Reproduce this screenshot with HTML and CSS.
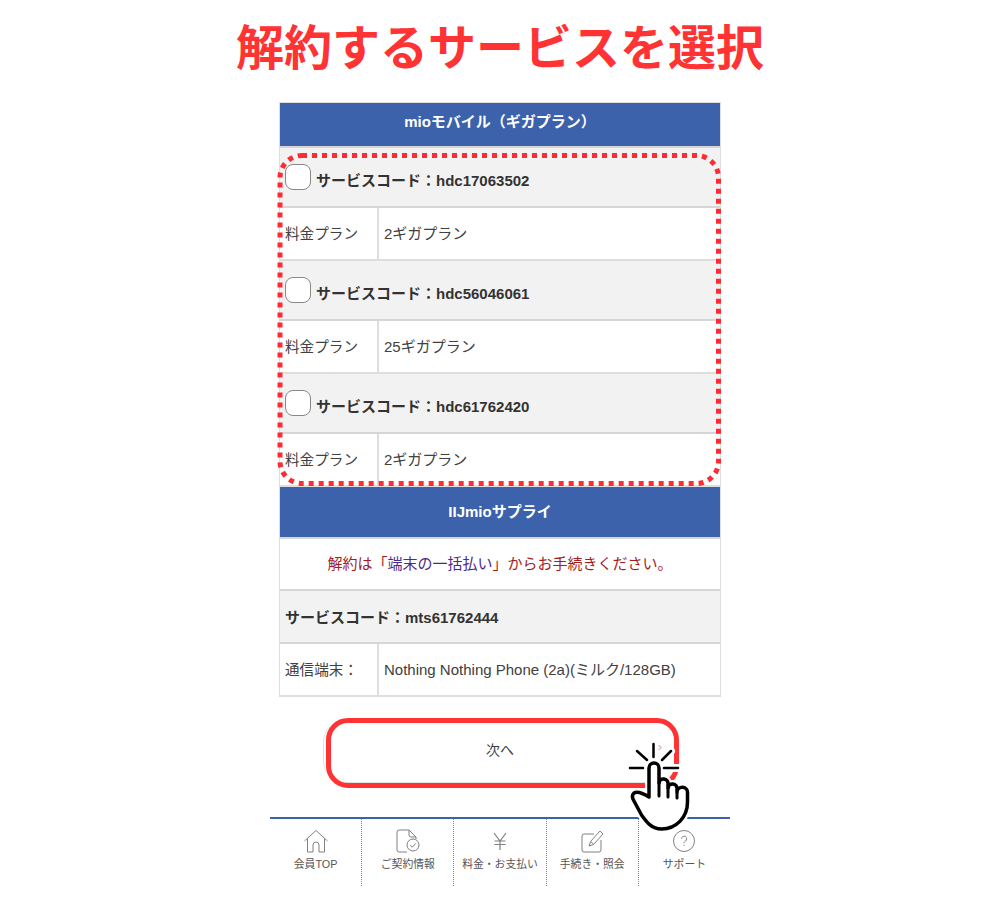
FILE: index.html
```html
<!DOCTYPE html>
<html lang="ja">
<head>
    <meta charset="UTF-8">
    <meta name="viewport" content="width=device-width, initial-scale=1.0">
    <title>解約するサービスを選択</title>
    <link rel="stylesheet" href="styles.css">
</head>
<body>

<h1 class="page-title">解約するサービスを選択</h1>

<div class="phone">
    <div class="service-table">
        <div class="group-head group-head-first">mioモバイル（ギガプラン）</div>

        <div class="code-row"><span class="check"></span><span class="code-text">サービスコード：hdc17063502</span></div>
        <div class="info-row">
            <div class="info-label">料金プラン</div>
            <div class="info-value">2ギガプラン</div>
        </div>

        <div class="code-row"><span class="check"></span><span class="code-text">サービスコード：hdc56046061</span></div>
        <div class="info-row">
            <div class="info-label">料金プラン</div>
            <div class="info-value">25ギガプラン</div>
        </div>

        <div class="code-row"><span class="check"></span><span class="code-text">サービスコード：hdc61762420</span></div>
        <div class="info-row">
            <div class="info-label">料金プラン</div>
            <div class="info-value">2ギガプラン</div>
        </div>

        <div class="group-head">IIJmioサプライ</div>
        <div class="notice-row">解約は「<span class="notice-link">端末の一括払い</span>」からお手続きください。</div>
        <div class="code-row code-row-plain">サービスコード：mts61762444</div>
        <div class="info-row">
            <div class="info-label">通信端末：</div>
            <div class="info-value">Nothing Nothing Phone (2a)(ミルク/128GB)</div>
        </div>

        <!-- Red dotted marker over the three plan rows -->
        <svg class="dotted-marker" viewBox="0 0 448 338" fill="none">
            <rect x="4" y="5.500" width="438.500" height="328" rx="22" stroke="#ff2b33" stroke-width="5" stroke-dasharray="5 5"/>
        </svg>
    </div>

    <div class="next-wrap">
        <a class="next-button" href="#">次へ<span class="next-arrow">&#8250;</span><span class="next-marker"></span></a>
    </div>

    <nav class="bottom-nav">
        <a class="nav-item" href="#">
            <svg class="nav-icon" viewBox="0 0 28 28" fill="none" stroke="#808080" stroke-width="1">
                <path d="M2.500 14 14 3.500 25.500 14"/>
                <path d="M5.500 11.500V25h5.500v-7a3 3 0 0 1 6 0v7h5.500V11.500"/>
            </svg>
            <span>会員TOP</span>
        </a>
        <a class="nav-item" href="#">
            <svg class="nav-icon" viewBox="0 0 28 28" fill="none" stroke="#808080" stroke-width="1">
                <path d="M13 25H5a2 2 0 0 1-2-2V5a2 2 0 0 1 2-2h10l7 7v2"/>
                <path d="M15 3v5a2 2 0 0 0 2 2h5"/>
                <circle cx="19" cy="18" r="6"/>
                <path d="m16.300 18 2 2.200 3.400-3.800"/>
            </svg>
            <span>ご契約情報</span>
        </a>
        <a class="nav-item" href="#">
            <svg class="nav-icon" viewBox="0 0 28 28" fill="none" stroke="#808080" stroke-width="1.200">
                <path d="m8 6 6 8 6-8M14 14v9M8.500 14h11M8.500 17.500h11"/>
            </svg>
            <span>料金・お支払い</span>
        </a>
        <a class="nav-item" href="#">
            <svg class="nav-icon" viewBox="0 0 28 28" fill="none" stroke="#808080" stroke-width="1">
                <path d="M16 7H6a2 2 0 0 0-2 2v14a2 2 0 0 0 2 2h15a2 2 0 0 0 2-2V13"/>
                <path d="m11 19 1.500-4.500L22 4l3 3-9.500 10.500z"/>
                <path d="m12.500 14.500 3 2.500"/>
            </svg>
            <span>手続き・照会</span>
        </a>
        <a class="nav-item" href="#">
            <svg class="nav-icon" viewBox="0 0 28 28" fill="none" stroke="#808080" stroke-width="1">
                <circle cx="14" cy="14" r="10.500"/>
                <path d="M11.500 11.800a2.600 2.600 0 1 1 4 2.200c-1 .6-1.500 1.100-1.500 2.200"/>
                <path d="M14 17.800v1.200"/>
            </svg>
            <span>サポート</span>
        </a>
    </nav>

    <!-- Tap hand over the next button -->
    <svg class="tap-hand" viewBox="0 0 80 100" fill="none" stroke-linecap="round" stroke-linejoin="round">
        <g stroke="#fff" stroke-width="8">
            <path d="M33 9v13M17 16l10 9M51 16l-9 9M10 33h13M44 33h14"/>
            <path d="M29 62V33a5 5 0 0 1 10 0v15a4.500 4.500 0 0 1 9 1v4a4.500 4.500 0 0 1 9 1v3a5 5 0 0 1 10.500 1v9c0 15-11 27-26 27-10 0-15-7-20-14L14 66c-2-3-2-6 0-8 3-2 7-1 10 0z"/>
        </g>
        <path stroke="#000" stroke-width="2.500" d="M33.500 9v13M17 16l10 9M51 16l-9 9M10 33h13M44 33h14"/>
        <path fill="#fff" stroke="#000" stroke-width="3.500" d="M29 62V33a5 5 0 0 1 10 0v15a4.500 4.500 0 0 1 9 1v4a4.500 4.500 0 0 1 9 1v3a5 5 0 0 1 10.500 1v9c0 15-11 27-26 27-10 0-15-7-20-14L14 66c-2-3-2-6 0-8 3-2 7-1 15 4z"/>
        <path stroke="#000" stroke-width="3" d="M39 48v13M48 53v9M57 58v5"/>
    </svg>
</div>

</body>
</html>
```

FILE: styles.css
```css
body {
    margin: 0;
    padding: 0;
    background-color: #fff;
    color: #404040;
    font-family: "Liberation Sans", "Noto Sans CJK JP", sans-serif;
    font-size: 15px;
}
a {
    color: inherit;
    text-decoration: none;
}
.page-title {
    margin: 0;
    height: 102px;
    padding-top: 11px;
    box-sizing: border-box;
    text-align: center;
    color: #ff3333;
    font-family: "Noto Sans CJK JP", sans-serif;
    font-size: 48px;
    font-weight: 700;
    line-height: 66px;
}
.phone {
    position: relative;
    width: 460px;
    margin: 0 auto;
}
.service-table {
    position: relative;
    width: 442px;
    margin: 0 auto;
    box-sizing: border-box;
    border-top: 1px solid #ddd;
    border-left: 1px solid #ddd;
    border-right: 1px solid #ddd;
}
.group-head {
    display: flex;
    align-items: center;
    justify-content: center;
    height: 52px;
    box-sizing: border-box;
    padding-bottom: 3px;
    background-color: #3c62ab;
    border-bottom: 2px solid #d6d6d6;
    color: #fff;
    font-weight: 700;
}
.group-head-first {
    height: 45px;
    padding-bottom: 9px;
}
.code-row {
    display: flex;
    align-items: center;
    gap: 5px;
    height: 60px;
    box-sizing: border-box;
    padding: 0 5px;
    background-color: #f2f2f2;
    border-bottom: 2px solid #d6d6d6;
    color: #333;
    font-weight: 700;
}
.code-row-plain {
    height: 53px;
}
.code-text {
    margin-top: 5px;
}
.check {
    flex: none;
    width: 26px;
    height: 26px;
    box-sizing: border-box;
    background-color: #fff;
    border: 1.5px solid #888;
    border-radius: 8px;
}
.info-row {
    display: flex;
    height: 53px;
    box-sizing: border-box;
    border-bottom: 2px solid #dedede;
}
.info-label {
    display: flex;
    align-items: center;
    width: 99px;
    box-sizing: border-box;
    padding: 0 0 3px 5px;
    border-right: 2px solid #dedede;
    font-size: 14.600px;
}
.info-value {
    display: flex;
    align-items: center;
    padding: 0 0 3px 5px;
}
.notice-row {
    display: flex;
    align-items: center;
    justify-content: center;
    height: 52px;
    box-sizing: border-box;
    padding-bottom: 3px;
    border-bottom: 2px solid #d6d6d6;
    color: #a61c1c;
}
.notice-link {
    color: #4b2a8c;
}
.dotted-marker {
    position: absolute;
    left: -4px;
    top: 47px;
    width: 448px;
    height: 338px;
}
.next-wrap {
    display: flex;
    justify-content: center;
    padding: 23px 0 34px;
}
.next-button {
    position: relative;
    display: flex;
    align-items: center;
    justify-content: center;
    width: 354px;
    height: 63px;
    box-sizing: border-box;
    padding-bottom: 5px;
    background-color: #fff;
    border: 1px solid #e2e2e2;
    border-radius: 22px;
    font-size: 14px;
}
.next-arrow {
    position: absolute;
    right: 14px;
    top: 18px;
    color: #f0a0a8;
    font-size: 13px;
}
.next-marker {
    position: absolute;
    left: 2px;
    top: -3px;
    width: 353px;
    height: 70px;
    box-sizing: border-box;
    border: 5px solid #ff3333;
    border-radius: 22px;
}
.bottom-nav {
    display: flex;
    height: 67px;
    border-top: 2px solid #3c62ab;
}
.nav-item {
    flex: 1;
    display: flex;
    flex-direction: column;
    align-items: center;
    padding-top: 8px;
    box-sizing: border-box;
    border-left: 1px dotted #888;
    font-size: 10.800px;
    line-height: 16px;
    color: #555;
}
.nav-item:first-child {
    border-left: none;
}
.nav-icon {
    width: 28px;
    height: 28px;
    margin-bottom: 1px;
}
.tap-hand {
    position: absolute;
    left: 350px;
    top: 633px;
    width: 80px;
    height: 100px;
}
```
